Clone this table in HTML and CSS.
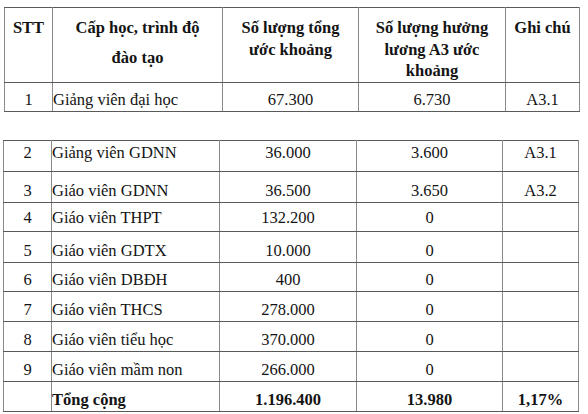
FILE: index.html
```html
<!DOCTYPE html>
<html lang="vi">
<head>
<meta charset="utf-8">
<link rel="stylesheet" href="styles.css">
</head>
<body>
<div class="page">
  <table class="tbl tbl-head">
    <colgroup>
      <col class="c1a"><col class="c2a"><col class="c3a"><col class="c4a"><col class="c5a">
    </colgroup>
    <thead>
      <tr class="hrow">
        <th>STT</th>
        <th class="tall">Cấp học, trình độ<br>đào tạo</th>
        <th>Số lượng tổng<br>ước khoảng</th>
        <th>Số lượng hưởng<br>lương A3 ước<br>khoảng</th>
        <th>Ghi chú</th>
      </tr>
    </thead>
    <tbody>
      <tr class="r29">
        <td class="ctr">1</td>
        <td class="name">Giảng viên đại học</td>
        <td class="ctr">67.300</td>
        <td class="ctr">6.730</td>
        <td class="ctr">A3.1</td>
      </tr>
    </tbody>
  </table>

  <table class="tbl tbl-body">
    <colgroup>
      <col class="c1b"><col class="c2b"><col class="c3b"><col class="c4b"><col class="c5b">
    </colgroup>
    <tbody>
      <tr class="r31 mid">
        <td class="ctr">2</td>
        <td class="name">Giảng viên GDNN</td>
        <td class="ctr">36.000</td>
        <td class="ctr">3.600</td>
        <td class="ctr">A3.1</td>
      </tr>
      <tr class="r31">
        <td class="ctr">3</td>
        <td class="name">Giáo viên GDNN</td>
        <td class="ctr">36.500</td>
        <td class="ctr">3.650</td>
        <td class="ctr">A3.2</td>
      </tr>
      <tr class="r29 low">
        <td class="ctr">4</td>
        <td class="name">Giáo viên THPT</td>
        <td class="ctr">132.200</td>
        <td class="ctr">0</td>
        <td></td>
      </tr>
      <tr class="r31">
        <td class="ctr">5</td>
        <td class="name">Giáo viên GDTX</td>
        <td class="ctr">10.000</td>
        <td class="ctr">0</td>
        <td></td>
      </tr>
      <tr class="r29">
        <td class="ctr">6</td>
        <td class="name">Giáo viên DBĐH</td>
        <td class="ctr shift">400</td>
        <td class="ctr">0</td>
        <td></td>
      </tr>
      <tr class="r30">
        <td class="ctr">7</td>
        <td class="name">Giáo viên THCS</td>
        <td class="ctr">278.000</td>
        <td class="ctr">0</td>
        <td></td>
      </tr>
      <tr class="r30">
        <td class="ctr">8</td>
        <td class="name">Giáo viên tiểu học</td>
        <td class="ctr">370.000</td>
        <td class="ctr">0</td>
        <td></td>
      </tr>
      <tr class="r30">
        <td class="ctr">9</td>
        <td class="name">Giáo viên mầm non</td>
        <td class="ctr">266.000</td>
        <td class="ctr">0</td>
        <td></td>
      </tr>
      <tr class="r30 total">
        <td></td>
        <td class="name">Tổng cộng</td>
        <td class="ctr">1.196.400</td>
        <td class="ctr">13.980</td>
        <td class="ctr">1,17%</td>
      </tr>
    </tbody>
  </table>
</div>
</body>
</html>
```

FILE: styles.css
```css
* { box-sizing: border-box; }

html, body {
  margin: 0;
  padding: 0;
  background: #ffffff;
}

body {
  font-family: "Liberation Serif", "Times New Roman", serif;
  font-size: 16.5px;
  color: #141414;
  width: 588px;
  height: 414px;
  overflow: hidden;
}

.page {
  display: flex;
  flex-direction: column;
  padding-top: 7px;
}

.tbl {
  border-collapse: collapse;
  table-layout: fixed;
}

.tbl td,
.tbl th {
  border-left: 1px solid #8a8a8a;
  border-right: 1px solid #8a8a8a;
  border-top: 1px solid #5a5a5a;
  border-bottom: 1px solid #5a5a5a;
  padding: 0;
}

.tbl-head {
  margin-left: 4px;
  width: 575px;
}

.tbl-body {
  margin-left: 3px;
  margin-top: 28px;
  width: 575px;
}

.c1a { width: 48px; }
.c2a { width: 170px; }
.c3a { width: 136px; }
.c4a { width: 147px; }
.c5a { width: 74px; }

.c1b { width: 48px; }
.c2b { width: 168px; }
.c3b { width: 137px; }
.c4b { width: 146px; }
.c5b { width: 76px; }

.hrow { height: 74px; }

.hrow th {
  vertical-align: top;
  text-align: center;
  font-weight: bold;
  line-height: 21.5px;
  padding-top: 9px;
}

.hrow th.tall {
  line-height: 30px;
  padding-top: 5px;
}

.tbl tbody td {
  vertical-align: bottom;
  line-height: 20px;
  padding-bottom: 1px;
  white-space: nowrap;
}

.r29 { height: 29px; }
.r30 { height: 30px; }
.r31 { height: 31px; }

.tbl tbody tr.mid td { padding-bottom: 8px; }
.tbl tbody tr.low td { padding-bottom: 3px; }

.ctr { text-align: center; }

.name {
  text-align: left;
  padding-left: 6px;
}

.shift { padding-right: 10px; }

.total td { font-weight: bold; }
```
